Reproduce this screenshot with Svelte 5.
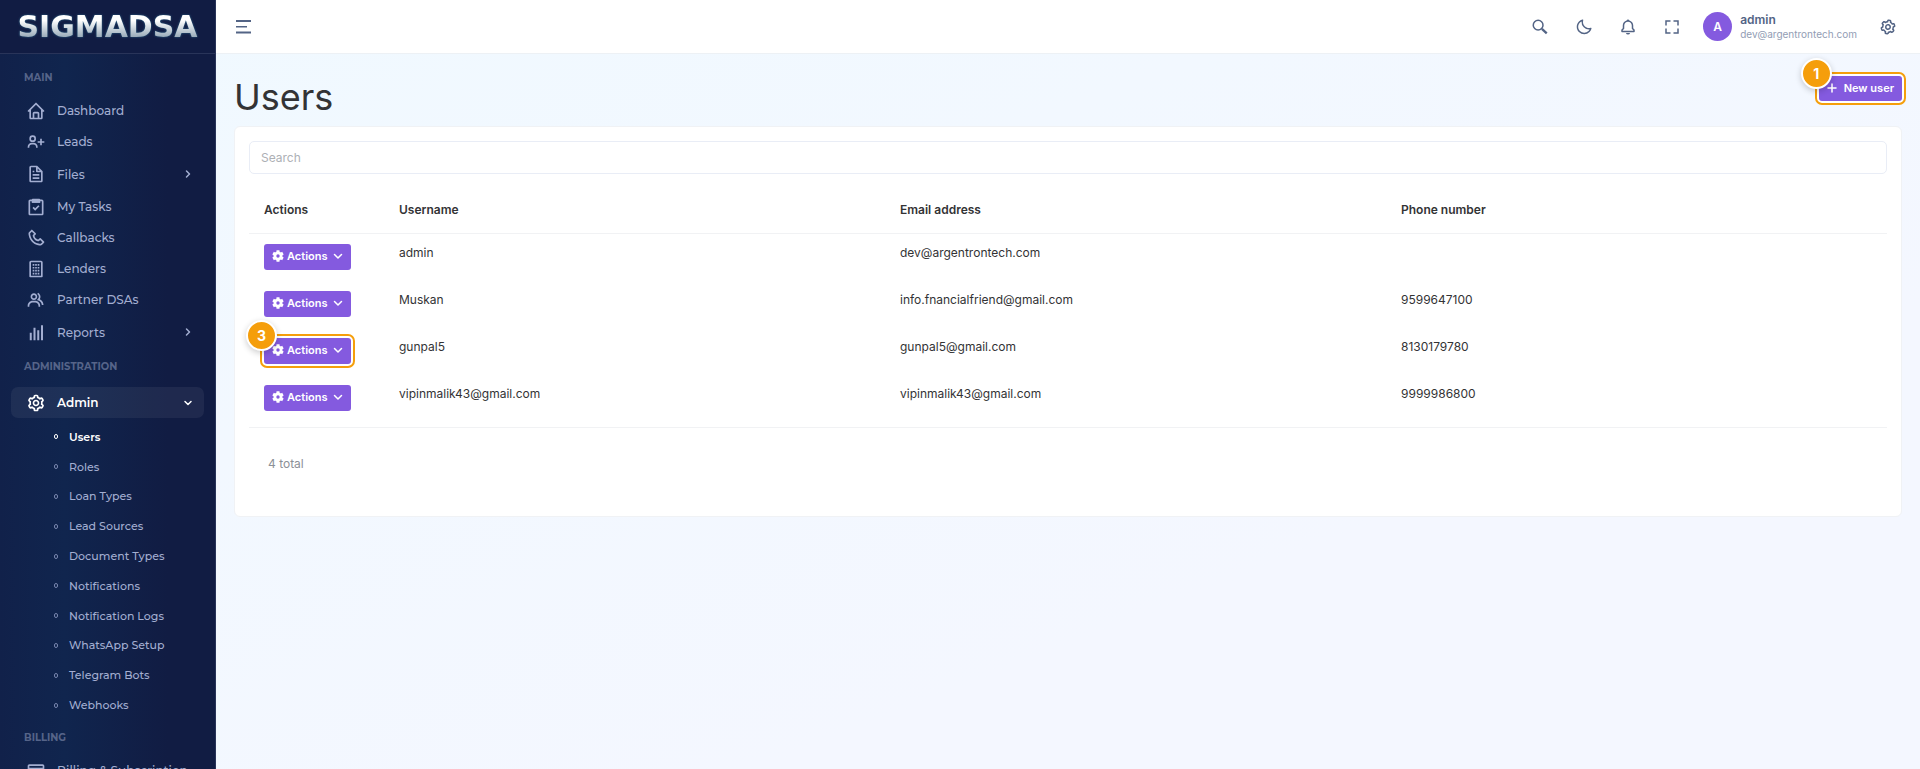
<script>
  const icons = {
    home: ['M3 13h1v7c0 1.103.897 2 2 2h12c1.103 0 2-.897 2-2v-7h1a1 1 0 0 0 .707-1.707l-9-9a.999.999 0 0 0-1.414 0l-9 9A1 1 0 0 0 3 13zm7 7v-5h4v5h-4zm2-15.586 6 6V15l.001 5H16v-5c0-1.103-.897-2-2-2h-4c-1.103 0-2 .897-2 2v5H6v-9.586l6-6z'],
    userPlus: ['M19 8h-2v3h-3v2h3v3h2v-3h3v-2h-3zM4 8a3.91 3.91 0 0 0 4 4 3.91 3.91 0 0 0 4-4 3.91 3.91 0 0 0-4-4 3.91 3.91 0 0 0-4 4zm6 0a1.91 1.91 0 0 1-2 2 1.91 1.91 0 0 1-2-2 1.91 1.91 0 0 1 2-2 1.91 1.91 0 0 1 2 2zM4 18a3 3 0 0 1 3-3h2a3 3 0 0 1 3 3v1h2v-1a5 5 0 0 0-5-5H7a5 5 0 0 0-5 5v1h2z'],
    file: ['M19.903 8.586a.997.997 0 0 0-.196-.293l-6-6a.997.997 0 0 0-.293-.196c-.03-.014-.062-.022-.094-.033a.991.991 0 0 0-.259-.051C13.04 2.011 13.021 2 13 2H6c-1.103 0-2 .897-2 2v16c0 1.103.897 2 2 2h12c1.103 0 2-.897 2-2V9c0-.021-.011-.04-.013-.062a.952.952 0 0 0-.051-.259c-.01-.032-.019-.063-.033-.093zM16.586 8H14V5.414L16.586 8zM6 20V4h6v5a1 1 0 0 0 1 1h5l.002 10H6z', 'M8 12h8v2H8zm0 4h8v2H8zm0-8h2v2H8z'],
    task: ['M5 22h14c1.103 0 2-.897 2-2V5a2 2 0 0 0-2-2h-2a1 1 0 0 0-1-1H8a1 1 0 0 0-1 1H5c-1.103 0-2 .897-2 2v15c0 1.103.897 2 2 2zM5 5h2v2h10V5h2v15H5V5z', 'm11 13.586-1.793-1.793-1.414 1.414L11 16.414l5.207-5.207-1.414-1.414z', 'M7 3h10v4H7z'],
    phone: ['M17.707 12.293a.999.999 0 0 0-1.414 0l-1.594 1.594c-.739-.22-2.118-.72-2.992-1.594s-1.374-2.253-1.594-2.992l1.594-1.594a.999.999 0 0 0 0-1.414l-4-4a.999.999 0 0 0-1.414 0L3.581 5.005c-.38.38-.594.902-.586 1.435.023 1.424.4 6.37 4.298 10.268s8.844 4.274 10.269 4.298h.028c.528 0 1.027-.208 1.405-.586l2.712-2.712a.999.999 0 0 0 0-1.414l-4-4.001zm-.127 6.712c-1.248-.021-5.518-.356-8.873-3.712-3.366-3.366-3.692-7.651-3.712-8.874L7 4.414 9.586 7 8.293 8.293a1 1 0 0 0-.272.912c.024.115.611 2.842 2.271 4.502s4.387 2.247 4.502 2.271a.991.991 0 0 0 .912-.271L17 14.414 19.586 17l-2.006 2.005z'],
    building: ['M18 2H6c-1.103 0-2 .897-2 2v17a1 1 0 0 0 1 1h14a1 1 0 0 0 1-1V4c0-1.103-.897-2-2-2zm0 18H6V4h12v16z', 'M8 6h2v2H8zm3 0h2v2h-2zm3 0h2v2h-2zM8 9.500h2v2H8zm3 0h2v2h-2zm3 0h2v2h-2zM8 13h2v2H8zm3 0h2v2h-2zm3 0h2v2h-2zM8 16.500h2v2H8zm3 0h2v2h-2zm3 0h2v2h-2z'],
    group: ['M16.604 11.048a5.67 5.67 0 0 0 .751-3.44c-.179-1.784-1.175-3.361-2.803-4.44l-1.105 1.666c1.119.742 1.8 1.799 1.918 2.974a3.693 3.693 0 0 1-1.072 2.986l-1.192 1.192 1.618.475C18.951 13.701 19 17.957 19 18h2c0-1.789-.956-5.285-4.396-6.952z', 'M9.5 12c2.206 0 4-1.794 4-4s-1.794-4-4-4-4 1.794-4 4 1.794 4 4 4zm0-6c1.103 0 2 .897 2 2s-.897 2-2 2-2-.897-2-2 .897-2 2-2zm1.5 7H8c-3.309 0-6 2.691-6 6v1h2v-1c0-2.206 1.794-4 4-4h3c2.206 0 4 1.794 4 4v1h2v-1c0-3.309-2.691-6-6-6z'],
    chart: ['M4.500 13h2.400v9H4.500zM9 7h2.400v15H9zM13.500 10h2.400v12h-2.400zM18 4h2.400v18H18z'],
    card: ['M20 4H4c-1.103 0-2 .897-2 2v12c0 1.103.897 2 2 2h16c1.103 0 2-.897 2-2V6c0-1.103-.897-2-2-2zM4 6h16v2H4V6zm0 12v-6h16v6H4z'],
    cog: ['M12 16c2.206 0 4-1.794 4-4s-1.794-4-4-4-4 1.794-4 4 1.794 4 4 4zm0-6c1.084 0 2 .916 2 2s-.916 2-2 2-2-.916-2-2 .916-2 2-2z', 'm2.845 16.136 1 1.73c.531.917 1.809 1.261 2.73.73l.529-.306A8.1 8.1 0 0 0 9 19.402V20c0 1.103.897 2 2 2h2c1.103 0 2-.897 2-2v-.598a8.132 8.132 0 0 0 1.896-1.111l.529.306c.923.53 2.198.188 2.731-.731l.999-1.729a2.001 2.001 0 0 0-.731-2.732l-.505-.292a7.718 7.718 0 0 0 0-2.224l.505-.292a2.002 2.002 0 0 0 .731-2.732l-.999-1.729c-.531-.92-1.808-1.265-2.731-.732l-.529.306A8.1 8.1 0 0 0 15 4.598V4c0-1.103-.897-2-2-2h-2c-1.103 0-2 .897-2 2v.598a8.132 8.132 0 0 0-1.896 1.111l-.529-.306c-.924-.531-2.2-.187-2.731.732l-.999 1.729a2.001 2.001 0 0 0 .731 2.732l.505.292a7.683 7.683 0 0 0 0 2.223l-.505.292a2.003 2.003 0 0 0-.731 2.733zm3.326-2.758A5.703 5.703 0 0 1 6 12c0-.462.058-.926.17-1.378a.999.999 0 0 0-.47-1.108l-1.123-.65.998-1.729 1.145.662a.997.997 0 0 0 1.188-.142 6.071 6.071 0 0 1 2.384-1.399A1 1 0 0 0 11 5.3V4h2v1.3a1 1 0 0 0 .708.956 6.083 6.083 0 0 1 2.384 1.399.999.999 0 0 0 1.188.142l1.144-.661 1 1.729-1.124.649a1 1 0 0 0-.47 1.108c.112.452.17.916.17 1.378 0 .461-.058.925-.171 1.378a1 1 0 0 0 .471 1.108l1.123.649-.998 1.729-1.145-.661a.996.996 0 0 0-1.188.142 6.071 6.071 0 0 1-2.384 1.399A1 1 0 0 0 13 18.7l.002 1.3H11v-1.3a1 1 0 0 0-.708-.956 6.083 6.083 0 0 1-2.384-1.399.992.992 0 0 0-1.188-.141l-1.144.662-1-1.729 1.124-.651a1 1 0 0 0 .471-1.108z'],
    moon: ['M20.742 13.045a8.088 8.088 0 0 1-2.077.271c-2.135 0-4.14-.83-5.646-2.336a8.025 8.025 0 0 1-2.064-7.723A1 1 0 0 0 9.73 2.034a10.014 10.014 0 0 0-4.489 2.582c-3.898 3.898-3.898 10.243 0 14.143a9.937 9.937 0 0 0 7.072 2.93 9.93 9.93 0 0 0 7.07-2.929 10.007 10.007 0 0 0 2.583-4.491 1.001 1.001 0 0 0-1.224-1.224zm-2.772 4.301a7.947 7.947 0 0 1-5.656 2.343 7.953 7.953 0 0 1-5.658-2.344c-3.118-3.119-3.118-8.195 0-11.314a7.923 7.923 0 0 1 2.06-1.483 10.027 10.027 0 0 0 2.89 7.848 9.972 9.972 0 0 0 7.848 2.891 8.036 8.036 0 0 1-1.484 2.059z'],
    bell: ['M19 13.586V10c0-3.217-2.185-5.927-5.145-6.742C13.562 2.52 12.846 2 12 2s-1.562.52-1.855 1.258C7.185 4.074 5 6.783 5 10v3.586l-1.707 1.707A.996.996 0 0 0 3 16v2a1 1 0 0 0 1 1h16a1 1 0 0 0 1-1v-2a.996.996 0 0 0-.293-.707L19 13.586zM19 17H5v-.586l1.707-1.707A.996.996 0 0 0 7 14v-4c0-2.757 2.243-5 5-5s5 2.243 5 5v4c0 .266.105.52.293.707L19 16.414V17zm-7 5a2.98 2.98 0 0 0 2.818-2H9.182A2.98 2.98 0 0 0 12 22z'],
    fullscreen: ['M5 5h5V3H3v7h2zm5 14H5v-5H3v7h7zm11-5h-2v5h-5v2h7zm-2-4h2V3h-7v2h5z'],
  };

  const mainItems = [
    { label: 'Dashboard', icon: 'home' },
    { label: 'Leads', icon: 'userPlus' },
    { label: 'Files', icon: 'file', expandable: true },
    { label: 'My Tasks', icon: 'task' },
    { label: 'Callbacks', icon: 'phone' },
    { label: 'Lenders', icon: 'building' },
    { label: 'Partner DSAs', icon: 'group' },
    { label: 'Reports', icon: 'chart', expandable: true },
  ];

  const adminItems = ['Users', 'Roles', 'Loan Types', 'Lead Sources', 'Document Types', 'Notifications', 'Notification Logs', 'WhatsApp Setup', 'Telegram Bots', 'Webhooks'];

  const users = [
    { name: 'admin', email: 'dev@argentrontech.com', phone: '' },
    { name: 'Muskan', email: 'info.fnancialfriend@gmail.com', phone: '9599647100' },
    { name: 'gunpal5', email: 'gunpal5@gmail.com', phone: '8130179780', step: 3 },
    { name: 'vipinmalik43@gmail.com', email: 'vipinmalik43@gmail.com', phone: '9999986800' },
  ];

  let query = $state('');
  let shown = $derived(users.filter((u) => (u.name + u.email + u.phone).toLowerCase().includes(query.toLowerCase())));
</script>

{#snippet icon(name, cls = 'icon')}
  <svg class={cls} viewBox="0 0 24 24" fill="currentColor" aria-hidden="true">
    {#each icons[name] as d}<path {d} />{/each}
  </svg>
{/snippet}

{#snippet chevron(d)}
  <svg class="chevron" viewBox="0 0 10 10" fill="none" stroke="currentColor" stroke-width="1.500" stroke-linecap="round" stroke-linejoin="round" aria-hidden="true"><path {d} /></svg>
{/snippet}

<div class="layout">
  <aside>
    <a class="brand" href="#home"><span>SIGMADSA</span></a>
    <nav>
      <h2>MAIN</h2>
      {#each mainItems as item}
        <a class="item" class:expandable={item.expandable} href="#{item.icon}">
          {@render icon(item.icon, 'nav-icon')}
          <span>{item.label}</span>
          {#if item.expandable}{@render chevron('M3.500 2 6.500 5 3.500 8')}{/if}
        </a>
      {/each}
      <h2>ADMINISTRATION</h2>
      <a class="item active" href="#admin">
        {@render icon('cog', 'nav-icon')}
        <span>Admin</span>
        {@render chevron('M2 3.500 5 6.500 8 3.500')}
      </a>
      <ul>
        {#each adminItems as label, i}
          <li><a class="sub" class:current={i === 0} href="#sub{i}"><i></i>{label}</a></li>
        {/each}
      </ul>
      <h2>BILLING</h2>
      <a class="item" href="#billing">
        {@render icon('card', 'nav-icon')}
        <span>Billing &amp; Subscription</span>
      </a>
    </nav>
  </aside>

  <div class="content">
    <header>
      <button class="plain" aria-label="Toggle menu">
        <svg class="burger" viewBox="0 0 16 14" fill="currentColor" aria-hidden="true"><path d="M0 0h15v2H0zM0 6h11v1.500H0zM0 11.500h15v2H0z" /></svg>
      </button>
      <div class="tools">
        <button class="plain" aria-label="Search">
          <svg class="icon" viewBox="0 0 24 24" fill="none" stroke="currentColor" aria-hidden="true"><circle cx="9.500" cy="9.500" r="6.500" stroke-width="2" /><path d="m14.500 14.500 6.500 6" stroke-width="3" /></svg>
        </button>
        <button class="plain" aria-label="Dark mode">{@render icon('moon')}</button>
        <button class="plain" aria-label="Notifications">{@render icon('bell')}</button>
        <button class="plain" aria-label="Full screen">{@render icon('fullscreen')}</button>
      </div>
      <button class="plain account">
        <span class="avatar">A</span>
        <span class="who"><strong>admin</strong><small>dev@argentrontech.com</small></span>
      </button>
      <button class="plain" aria-label="Settings">{@render icon('cog', 'icon turned')}</button>
    </header>

    <main>
      <div class="heading">
        <h1>Users</h1>
        <div class="target">
          <button class="primary add">
            <svg class="plus" viewBox="0 0 10 10" fill="none" stroke="currentColor" stroke-width="1.500" stroke-linecap="round" aria-hidden="true"><path d="M5 1v8M1 5h8" /></svg>
            New user
          </button>
          <span class="step">1</span>
        </div>
      </div>

      <section>
        <input type="search" placeholder="Search" aria-label="Search" bind:value={query} />
        <table>
          <thead>
            <tr><th class="narrow">Actions</th><th>Username</th><th>Email address</th><th>Phone number</th></tr>
          </thead>
          <tbody>
            {#each shown as user}
              <tr>
                <td class="act">
                  <div class:target={user.step} class="holder">
                    <button class="primary">
                      <svg class="gear" viewBox="0 0 12 12" fill="none" stroke="currentColor" aria-hidden="true">
                        <circle cx="6" cy="6" r="3.100" stroke-width="2.800" />
                        <path stroke-width="3" stroke-linecap="butt" d="M6 0.300v2M6 9.700v2M1.060 3.150l1.750 1M9.190 7.850l1.750 1M1.060 8.850l1.750-1M9.190 4.150l1.750-1" />
                      </svg>
                      Actions
                      {@render chevron('M1.500 3.500 5 7 8.500 3.500')}
                    </button>
                    {#if user.step}<span class="step">{user.step}</span>{/if}
                  </div>
                </td>
                <td>{user.name}</td>
                <td>{user.email}</td>
                <td>{user.phone}</td>
              </tr>
            {/each}
          </tbody>
        </table>
        <p>{shown.length} total</p>
      </section>
    </main>
  </div>
</div>

<style>
  :global(body) {
    margin: 0;
    font-family: Inter, "Liberation Sans", sans-serif;
    font-size: 12px;
    color: #333335;
  }
  .layout {
    display: flex;
    height: 100vh;
    overflow: hidden;
    background: linear-gradient(to bottom right, #f0f9ff, #f4f7ff 70%);
  }
  a { color: inherit; text-decoration: none; }
  button { font: inherit; cursor: pointer; }

  aside {
    box-sizing: border-box;
    flex: none;
    width: 216px;
    overflow: hidden;
    border-right: 1px solid #293459;
    color: #a3aed1;
    background: linear-gradient(to right, #11214a, #10254e 30%, #111c43 78%);
    font-family: Montserrat, Inter, sans-serif;
  }
  .brand {
    display: flex;
    align-items: center;
    justify-content: center;
    height: 53px;
    border-bottom: 1px solid #293459;
    background: #111c43;
  }
  .brand span {
    font: bold 30px/34px "DejaVu Sans", sans-serif;
    color: transparent;
    background: linear-gradient(#fff 30%, #d5dde3 50%, #8fa2b2 85%);
    background-clip: text;
    filter: drop-shadow(0 0 1px #2b6286);
  }
  nav { padding: 6px 11px 0; }
  h2 {
    margin: 0 13px;
    font-size: 10px;
    font-weight: 700;
    line-height: 35px;
    color: #566489;
  }
  .item {
    display: flex;
    align-items: center;
    gap: 11px;
    height: 31px;
    padding: 0 11px 0 15px;
    font-size: 12px;
    font-weight: 500;
    white-space: nowrap;
  }
  .item span { flex: 1; }
  .expandable { height: 34px; }
  .active {
    margin: 3px 0 4px;
    border-radius: 7px;
    background: rgba(255, 255, 255, 0.06);
    color: #fff;
    font-weight: 600;
  }
  .nav-icon { flex: none; width: 20px; height: 20px; }
  .chevron { flex: none; width: 10px; height: 10px; }
  ul {
    display: grid;
    grid-auto-rows: 1fr;
    min-height: 298px;
    margin: 0;
    padding: 0;
    list-style: none;
  }
  .sub {
    display: flex;
    align-items: center;
    gap: 11px;
    height: 100%;
    padding-left: 43px;
    font-size: 11px;
    font-weight: 500;
  }
  .sub i {
    box-sizing: border-box;
    width: 4px;
    height: 5px;
    border: 1px solid #7886ae;
    border-radius: 2px;
  }
  .current { color: #fff; font-weight: 600; }
  .current i { border-color: #fff; }

  .content {
    flex: 1;
    min-width: 0;
    overflow: hidden;
  }
  header {
    display: flex;
    align-items: center;
    height: 53px;
    padding: 0 23px 0 20px;
    border-bottom: 1px solid #edf1f5;
    background: #fff;
    color: #536485;
  }
  .plain {
    display: flex;
    align-items: center;
    padding: 0;
    border: 0;
    background: none;
    color: inherit;
  }
  .icon { width: 18px; height: 18px; }
  .turned { transform: rotate(12deg); }
  .burger { width: 16px; height: 14px; }
  .tools { display: flex; gap: 26px; margin-left: auto; }
  .account { gap: 8px; margin: 0 22px 0 22px; text-align: left; }
  .avatar {
    width: 29px;
    border-radius: 50%;
    background: #845adf;
    color: #fff;
    font-weight: 600;
    line-height: 29px;
    text-align: center;
  }
  .who { display: grid; }
  .who strong { font-weight: 600; line-height: 14px; }
  .who small { font-size: 10px; line-height: 14px; color: #929db4; }

  main { padding: 0 18px; }
  .heading {
    display: flex;
    justify-content: space-between;
    align-items: flex-start;
    height: 72px;
  }
  h1 {
    margin: 21px 0 0;
    font-size: 36px;
    font-weight: 400;
    line-height: 44px;
  }
  .target {
    position: relative;
    border-radius: 3px;
    box-shadow: 0 0 0 2px #fff;
    outline: 2px solid #f59e0b;
    outline-offset: 2px;
  }
  .heading .target { margin-top: 22px; }
  .primary {
    display: flex;
    align-items: center;
    gap: 3px;
    height: 26px;
    padding: 0 8px 2px;
    border: 0;
    border-radius: 3px;
    background: #845adf;
    color: #fff;
    font-size: 11px;
    font-weight: 600;
  }
  .add { gap: 7px; height: 25px; }
  .plus { width: 10px; height: 10px; }
  .gear { width: 12px; height: 12px; }
  .primary .chevron { margin-left: 3px; }
  .step {
    position: absolute;
    top: -18px;
    left: -18px;
    width: 27px;
    border: 2px solid #fff;
    border-radius: 50%;
    background: #f59e0b;
    box-shadow: 0 2px 6px rgba(0, 0, 0, 0.2);
    color: #fff;
    font-size: 14px;
    font-weight: 700;
    line-height: 27px;
    text-align: center;
  }

  section {
    padding: 14px;
    border: 1px solid #f0f2f5;
    border-radius: 6px;
    background: #fff;
  }
  input {
    box-sizing: border-box;
    width: 100%;
    height: 33px;
    padding: 0 11px;
    border: 1px solid #e9edf6;
    border-radius: 5px;
    background: #fff;
    color: inherit;
    font: inherit;
  }
  input::placeholder { color: #adb0b5; }
  table {
    width: 100%;
    table-layout: fixed;
    border-collapse: collapse;
    margin-top: 11px;
    border-bottom: 1px solid #f1f2f4;
  }
  th {
    height: 48px;
    padding: 0 15px;
    border-bottom: 1px solid #f1f2f4;
    font-weight: 600;
    text-align: left;
  }
  .narrow { width: 105px; }
  td {
    height: 37px;
    padding: 10px 15px 0;
    line-height: 18px;
    vertical-align: top;
  }
  tbody::after { content: ""; display: block; height: 5px; }
  .holder { width: max-content; }
  p {
    margin: 27px 0 29px 19px;
    line-height: 18px;
    color: #8c9097;
  }
</style>
